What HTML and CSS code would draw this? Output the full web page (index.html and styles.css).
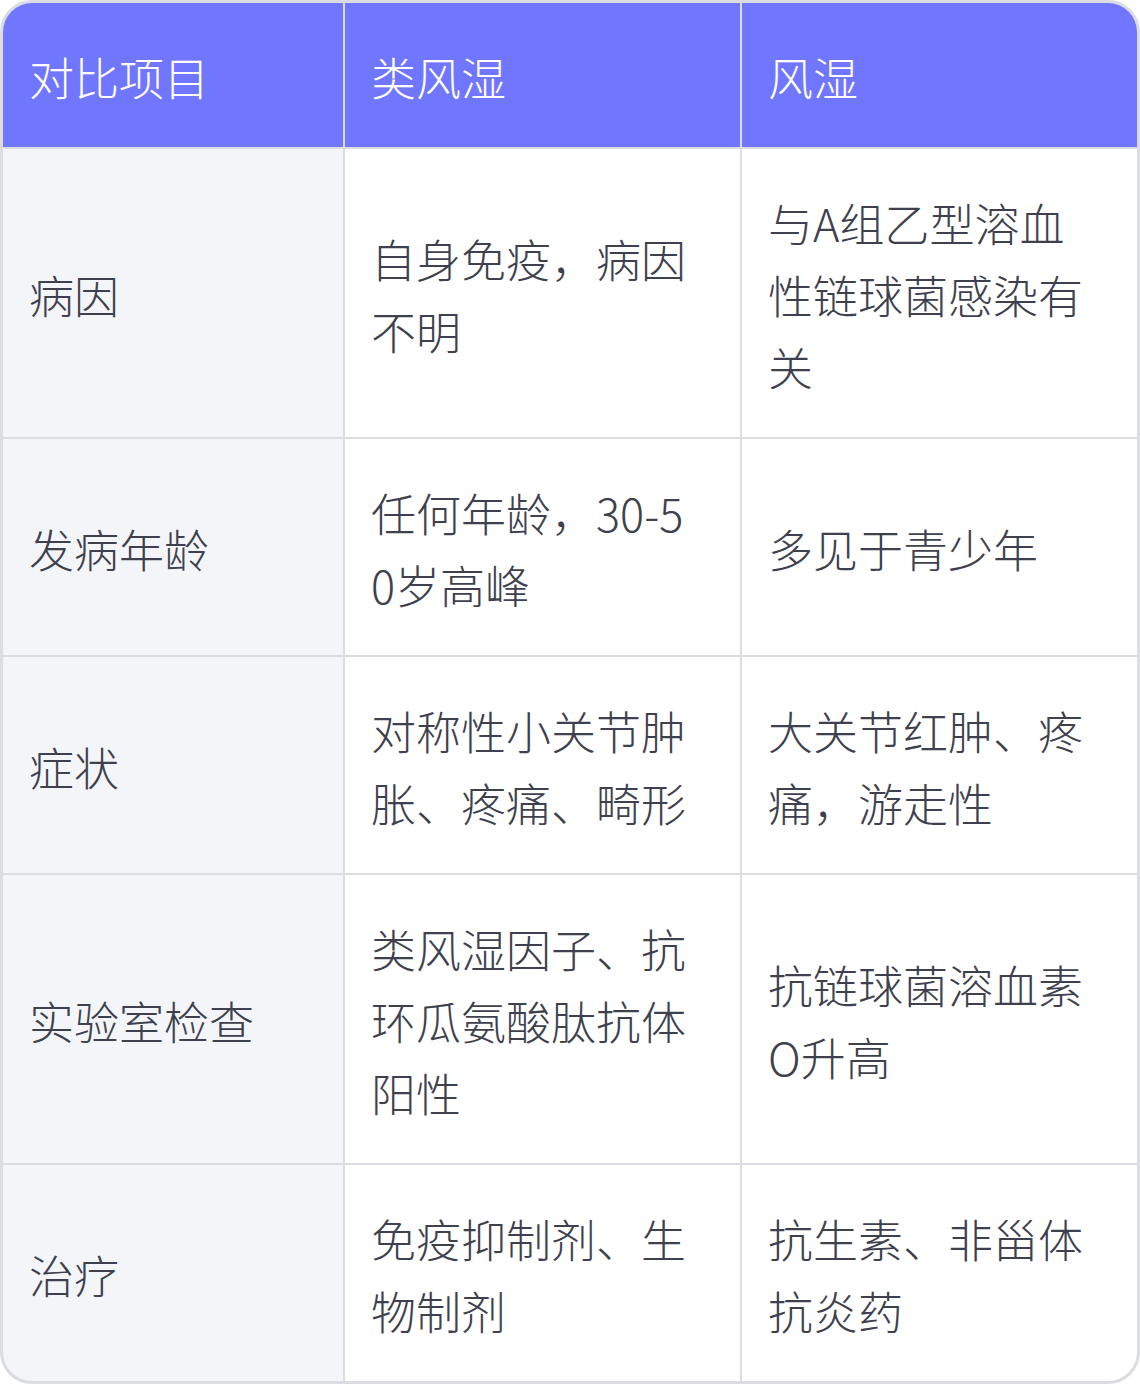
FILE: index.html
```html
<!DOCTYPE html>
<html lang="zh-CN">
<head>
<meta charset="utf-8">
<title>类风湿与风湿对比</title>
<link rel="stylesheet" href="styles.css">
</head>
<body>
<div class="table">
  <div class="cell head">对比项目</div>
  <div class="cell head">类风湿</div>
  <div class="cell head">风湿</div>

  <div class="cell label">病因</div>
  <div class="cell">自身免疫，病因不明</div>
  <div class="cell">与A组乙型溶血性链球菌感染有关</div>

  <div class="cell label">发病年龄</div>
  <div class="cell">任何年龄，30-50岁高峰</div>
  <div class="cell">多见于青少年</div>

  <div class="cell label">症状</div>
  <div class="cell">对称性小关节肿胀、疼痛、畸形</div>
  <div class="cell">大关节红肿、疼痛，游走性</div>

  <div class="cell label">实验室检查</div>
  <div class="cell">类风湿因子、抗环瓜氨酸肽抗体阳性</div>
  <div class="cell">抗链球菌溶血素O升高</div>

  <div class="cell label">治疗</div>
  <div class="cell">免疫抑制剂、生物制剂</div>
  <div class="cell">抗生素、非甾体抗炎药</div>
</div>
</body>
</html>
```

FILE: styles.css
```css
html, body {
  margin: 0;
  padding: 0;
  background: #ffffff;
}

.table {
  box-sizing: border-box;
  width: 1140px;
  display: grid;
  grid-template-columns: 340px 395px 395px;
  gap: 2px;
  background: #dcdde3;
  border: 3px solid #dcdde3;
  border-radius: 32px;
  overflow: hidden;
  font-family: "Noto Sans CJK SC", "Noto Sans", sans-serif;
  font-weight: 200;
  font-size: 45px;
  line-height: 72px;
  color: #3e414d;
}

.cell {
  display: flex;
  align-items: center;
  padding: 38px 48px 34px 26px;
  background: #ffffff;
  word-break: break-all;
  line-break: anywhere;
}

.cell.head {
  background: #7176ff;
  color: #ffffff;
}

.cell.label {
  background: #f4f5f9;
}
```
